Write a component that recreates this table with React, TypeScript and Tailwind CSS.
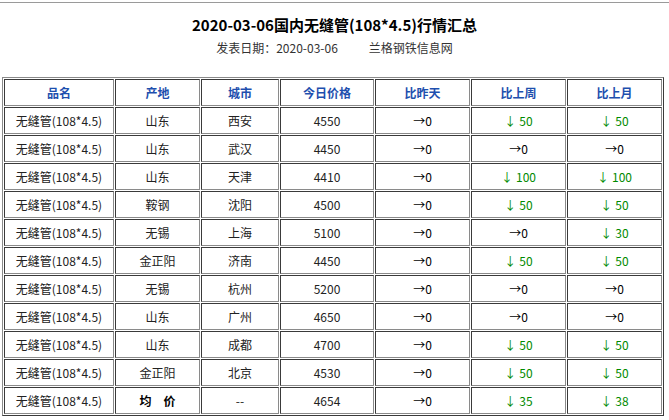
import React from 'react'

type Change = number | null

interface Row {
  origin: string
  city: string
  price: string
  week: Change
  month: Change
  avg?: boolean
}

const rows: Row[] = [
  { origin: '山东', city: '西安', price: '4550', week: 50, month: 50 },
  { origin: '山东', city: '武汉', price: '4450', week: null, month: null },
  { origin: '山东', city: '天津', price: '4410', week: 100, month: 100 },
  { origin: '鞍钢', city: '沈阳', price: '4500', week: 50, month: 50 },
  { origin: '无锡', city: '上海', price: '5100', week: null, month: 30 },
  { origin: '金正阳', city: '济南', price: '4450', week: 50, month: 50 },
  { origin: '无锡', city: '杭州', price: '5200', week: null, month: null },
  { origin: '山东', city: '广州', price: '4650', week: null, month: null },
  { origin: '山东', city: '成都', price: '4700', week: 50, month: 50 },
  { origin: '金正阳', city: '北京', price: '4530', week: 50, month: 50 },
  { origin: '均价', city: '--', price: '4654', week: 35, month: 38, avg: true },
]

const headers = ['品名', '产地', '城市', '今日价格', '比昨天', '比上周', '比上月']
const widths = ['w-[110px]', 'w-[85px]', 'w-[78px]', 'w-[94px]', 'w-[95px]', 'w-[95px]', 'w-[95px]']

const cell =
  'h-[27px] p-0 text-center align-middle border border-t-[#3a3a3a] border-l-[#3a3a3a] border-r-[#8a8a8a] border-b-[#8a8a8a]'

function ChangeCell({ value }: { value: Change }) {
  if (value === null) {
    return <span className="text-black">→0</span>
  }
  return (
    <span className="text-[#008a00]">
      ↓<span className="ml-[3px]">{value}</span>
    </span>
  )
}

export default function App() {
  return (
    <div className="mt-[2px] border-t border-[#9a9a9a] bg-white font-['Noto_Sans_CJK_SC',sans-serif] text-[12px] text-[#222]">
      <div className="mt-[11px] h-[22px] text-center text-[15px] font-bold leading-[22px] text-black">
        2020-03-06国内无缝管(108*4.5)行情汇总
      </div>
      <div className="mt-[2px] h-[20px] text-center leading-[20px] text-[#333]">
        <span>发表日期：2020-03-06</span>
        <span className="ml-[31px]">兰格钢铁信息网</span>
      </div>

      <table className="ml-[2px] mt-[19px] w-[662px] table-fixed border-separate border-spacing-[1px] border border-t-[#8a8a8a] border-l-[#8a8a8a] border-r-[#3a3a3a] border-b-[#3a3a3a]">
        <thead>
          <tr>
            {headers.map((h, i) => (
              <th key={h} className={`${cell} ${widths[i]} font-bold text-[#1e4fae]`}>
                {h}
              </th>
            ))}
          </tr>
        </thead>
        <tbody>
          {rows.map((r, i) => (
            <tr key={i}>
              <td className={cell}>无缝管(108*4.5)</td>
              <td className={`${cell} ${r.avg ? 'font-bold text-black' : ''}`}>
                {r.avg ? (
                  <>
                    均<span className="ml-[12px]">价</span>
                  </>
                ) : (
                  r.origin
                )}
              </td>
              <td className={cell}>{r.city}</td>
              <td className={cell}>{r.price}</td>
              <td className={cell}>
                <ChangeCell value={null} />
              </td>
              <td className={cell}>
                <ChangeCell value={r.week} />
              </td>
              <td className={cell}>
                <ChangeCell value={r.month} />
              </td>
            </tr>
          ))}
        </tbody>
      </table>
    </div>
  )
}
